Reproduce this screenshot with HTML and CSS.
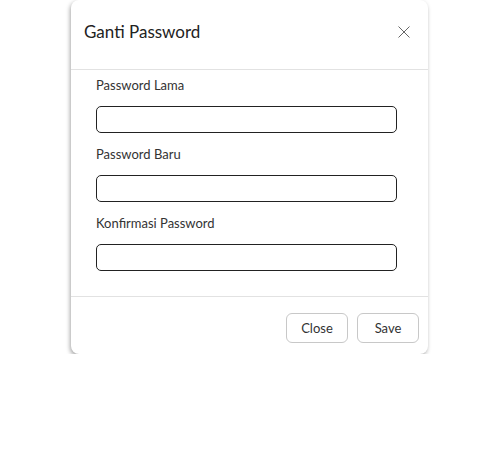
FILE: index.html
```html
<!DOCTYPE html>
<html>
<head>
<meta charset="utf-8">
<link rel="stylesheet" href="styles.css">
</head>
<body>
<div class="modal">
  <div class="modal-header">
    <h5 class="modal-title">Ganti Password</h5>
    <button class="btn-close" aria-label="Close">
      <svg width="12" height="12" viewBox="0 0 12 12"><path d="M0.5 0.5 L11.5 11.5 M11.5 0.5 L0.5 11.5" stroke="#666" stroke-width="1" fill="none"/></svg>
    </button>
  </div>
  <div class="modal-body">
    <div class="field">
      <label>Password Lama</label>
      <input type="password">
    </div>
    <div class="field">
      <label>Password Baru</label>
      <input type="password">
    </div>
    <div class="field">
      <label>Konfirmasi Password</label>
      <input type="password">
    </div>
  </div>
  <div class="modal-footer">
    <button class="btn">Close</button>
    <button class="btn">Save</button>
  </div>
</div>
</body>
</html>
```
FILE: styles.css
```css
html, body { margin: 0; padding: 0; background: #fff; }
body { font-family: Lato, "Open Sans", sans-serif; color: #212529; }
.modal {
  margin-left: 71px;
  width: 357px;
  height: 354px;
  box-sizing: border-box;
  background: #fff;
  border-radius: 8px;
  box-shadow: -1px 2px 4px rgba(0,0,0,0.35);
  display: flex;
  flex-direction: column;
}
.modal-header {
  height: 70px;
  box-sizing: border-box;
  border-bottom: 1px solid #e2e2e2;
  display: flex;
  align-items: center;
  justify-content: space-between;
  padding: 0 18px 6px 13px;
}
.modal-title { margin: 0; font-size: 17px; font-weight: 400; color: #222; }
.btn-close { border: 0; background: none; padding: 0; width: 12px; height: 12px; display: flex; margin-top: 0; }
.modal-body { padding: 6px 31px 0 25px; height: 227px; box-sizing: border-box; border-bottom: 1px solid #e2e2e2; }
.field { display: flex; flex-direction: column; }
.field label { font-size: 13px; color: #333; line-height: 18px; margin-bottom: 12px; }
.field input {
  height: 27px;
  box-sizing: border-box;
  border: 1px solid #222;
  border-radius: 5px;
  margin: 0 0 12px 0;
  padding: 0 8px;
  outline: none;
}
.modal-footer {
  flex: 1;
  display: flex;
  justify-content: flex-end;
  align-items: flex-start;
  gap: 9px;
  padding: 16px 9px 0 0;
}
.btn {
  width: 62px;
  height: 30px;
  border: 1px solid #c8c8c8;
  border-radius: 6px;
  background: #fff;
  font-family: Lato, "Open Sans", sans-serif;
  font-size: 13px;
  color: #333;
  padding: 0;
}
```
